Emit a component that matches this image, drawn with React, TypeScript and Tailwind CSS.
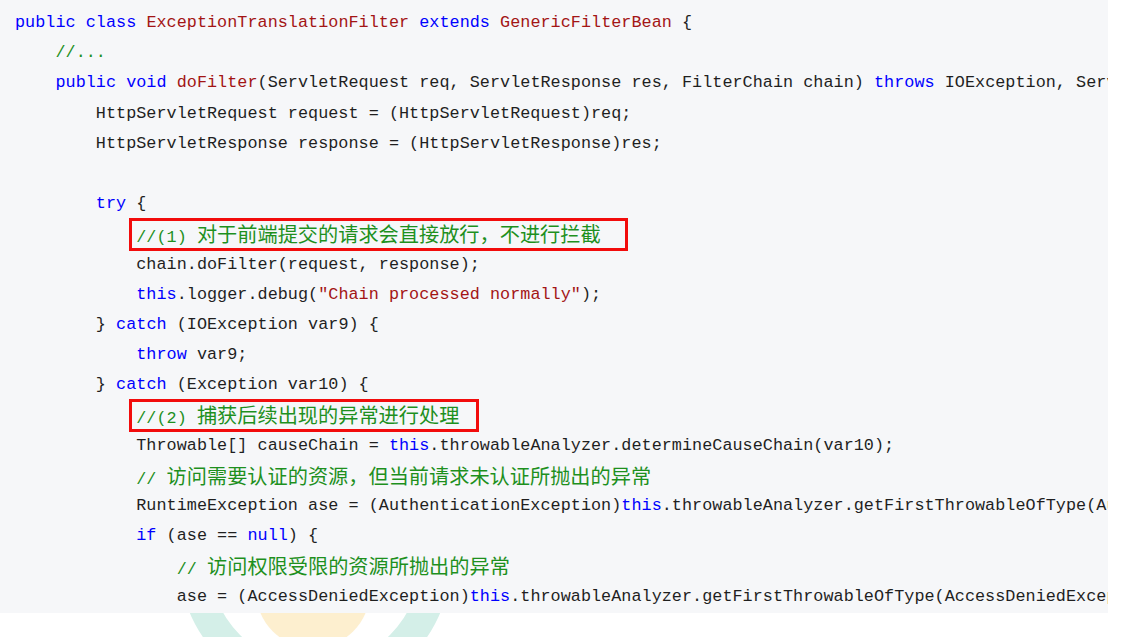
type Tok = [string, string]

const color: Record<string, string> = {
  k: "text-[#0000ff]",
  t: "text-[#a31515]",
  s: "text-[#a31515]",
  c: "text-[#1e901e]",
  n: "text-[#1f1f1f]",
}

const I1 = "    "
const I2 = "        "
const I3 = "            "
const I4 = "                "

const lines: { toks: Tok[]; box?: string }[] = [
  { toks: [["k", "public class "], ["t", "ExceptionTranslationFilter "], ["k", "extends "], ["t", "GenericFilterBean"], ["n", " {"]] },
  { toks: [["n", I1], ["c", "//..."]] },
  {
    toks: [
      ["n", I1],
      ["k", "public void "],
      ["t", "doFilter"],
      ["n", "(ServletRequest req, ServletResponse res, FilterChain chain) "],
      ["k", "throws"],
      ["n", " IOException, ServletException {"],
    ],
  },
  { toks: [["n", I2 + "HttpServletRequest request = (HttpServletRequest)req;"]] },
  { toks: [["n", I2 + "HttpServletResponse response = (HttpServletResponse)res;"]] },
  { toks: [["n", ""]] },
  { toks: [["n", I2], ["k", "try"], ["n", " {"]] },
  { toks: [["n", I3], ["c", "//(1) "], ["z", "对于前端提交的请求会直接放行，不进行拦截"]], box: "w-[499px]" },
  { toks: [["n", I3 + "chain.doFilter(request, response);"]] },
  { toks: [["n", I3], ["k", "this"], ["n", ".logger.debug("], ["s", "\"Chain processed normally\""], ["n", ");"]] },
  { toks: [["n", I2 + "} "], ["k", "catch"], ["n", " (IOException var9) {"]] },
  { toks: [["n", I3], ["k", "throw"], ["n", " var9;"]] },
  { toks: [["n", I2 + "} "], ["k", "catch"], ["n", " (Exception var10) {"]] },
  { toks: [["n", I3], ["c", "//(2) "], ["z", "捕获后续出现的异常进行处理"]], box: "w-[350px]" },
  { toks: [["n", I3 + "Throwable[] causeChain = "], ["k", "this"], ["n", ".throwableAnalyzer.determineCauseChain(var10);"]] },
  { toks: [["n", I3], ["c", "// "], ["z", "访问需要认证的资源，但当前请求未认证所抛出的异常"]] },
  {
    toks: [
      ["n", I3 + "RuntimeException ase = (AuthenticationException)"],
      ["k", "this"],
      ["n", ".throwableAnalyzer.getFirstThrowableOfType(AuthenticationException.class, causeChain);"],
    ],
  },
  { toks: [["n", I3], ["k", "if"], ["n", " (ase == "], ["k", "null"], ["n", ") {"]] },
  { toks: [["n", I4], ["c", "// "], ["z", "访问权限受限的资源所抛出的异常"]] },
  {
    toks: [
      ["n", I4 + "ase = (AccessDeniedException)"],
      ["k", "this"],
      ["n", ".throwableAnalyzer.getFirstThrowableOfType(AccessDeniedException.class, causeChain);"],
    ],
  },
]

function Line({ toks, box }: { toks: Tok[]; box?: string }) {
  return (
    <div className="relative h-[30.2px] leading-[30.2px] whitespace-pre">
      {box && (
        <span
          className={`absolute left-[114px] top-[-1px] h-[33px] border-[3px] border-[#f20c0c] ${box}`}
        />
      )}
      {toks.map(([kind, text], i) =>
        kind === "z" ? (
          <span
            key={i}
            className="text-[#1e901e] text-[20.2px] tracking-normal font-['Noto_Sans_CJK_SC',sans-serif]"
          >
            {text}
          </span>
        ) : (
          <span key={i} className={color[kind]}>
            {text}
          </span>
        )
      )}
    </div>
  )
}

export default function App() {
  return (
    <div className="relative w-[1129px] h-[637px] bg-white overflow-hidden">
      {/* faint logo watermark peeking out under the code block */}
      <svg className="absolute left-0 top-0" width="1129" height="637" viewBox="0 0 1129 637">
        <circle cx="315" cy="560" r="121" fill="none" stroke="#d4efe8" strokeWidth="30" />
        <circle cx="313" cy="591" r="57" fill="#fdefcf" />
      </svg>

      <div className="relative w-[1108px] h-[613px] bg-[#f6f7f9] overflow-hidden pt-[8px] pl-[15px] font-['Liberation_Mono','Noto_Sans_CJK_SC',monospace] text-[16.8px] tracking-[0.035px]">
        {lines.map((l, i) => (
          <Line key={i} toks={l.toks} box={l.box} />
        ))}
      </div>
    </div>
  )
}
